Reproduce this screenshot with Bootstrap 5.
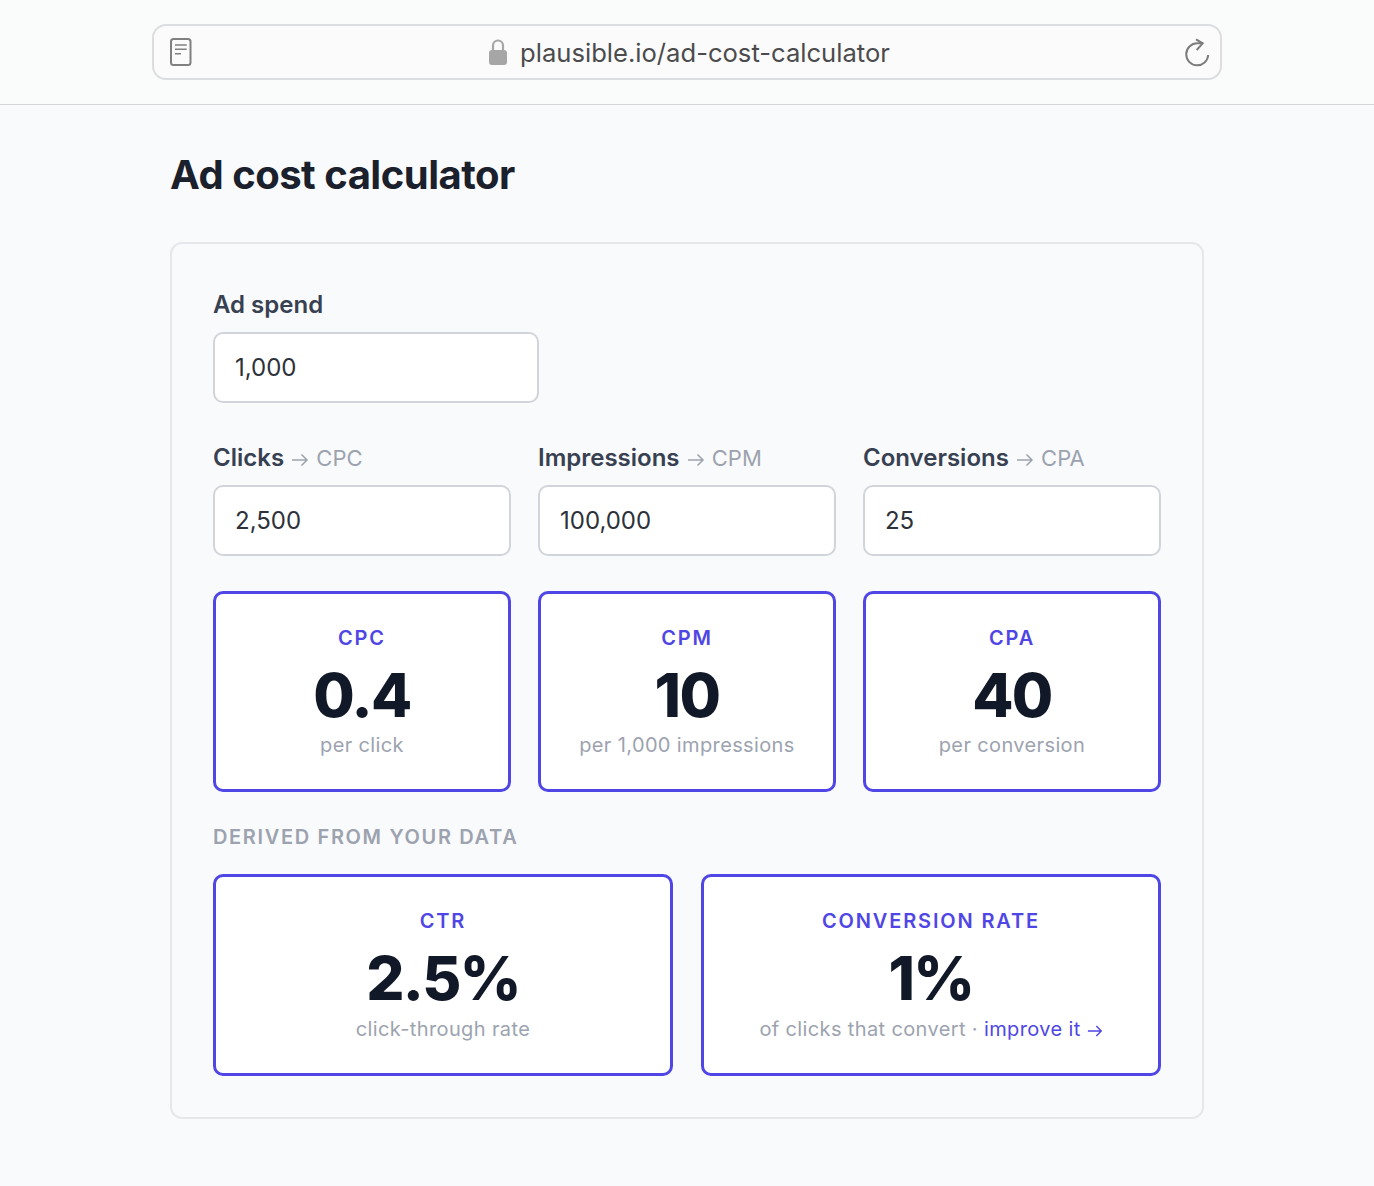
<!DOCTYPE html>
<html lang="en">
<head>
  <meta charset="UTF-8">
  <title>Ad cost calculator</title>
  <link href="https://cdn.jsdelivr.net/npm/bootstrap@5.3.3/dist/css/bootstrap.min.css" rel="stylesheet">
  <style>
    body { background: #f9fafb; font-family: Inter, "Liberation Sans", sans-serif; color: #111827; height: 1186px; overflow: hidden; }
    .browser-bar { height: 105px; padding: 24px 152px 0; background: #fafbfb; border-bottom: 1px solid #d5d6d8; }
    .url-box { height: 56px; padding: 0 10px 0 16px; border: 2px solid #dcdddf; border-radius: 14px; background: #fbfbfc; }
    .url-text { font-size: 25.6px; color: #4b4b4d; padding-top: 2px; }
    .url-center { gap: 13px; padding: 1px 0 0 3px; }
    .page-wrap { width: 1034px; margin-left: 170px; }
    .page-title { font-size: 40px; font-weight: 700; letter-spacing: -0.5px; color: #1a202c; line-height: 48px; margin: 46px 0 43px 0; }
    .calc-box { height: 877px; padding: 45px 41px 0; background: #f9fafb; border: 2px solid #e5e7eb; border-radius: 12px; }
    .field-label { display: block; font-size: 24px; font-weight: 600; color: #374151; line-height: 32px; margin-bottom: 11px; }
    .field-hint { font-weight: 400; color: #9ca3af; font-size: 22px; }
    .field-hint svg { vertical-align: -1px; margin: 0 1px; }
    .form-control.calc-input { height: 71px; padding: 0 20px; font-size: 24px; color: #2d3139; background: #fff; border: 2px solid #d1d5db; border-radius: 10px; }
    .spend-col { width: 326px; margin-bottom: 39px; }
    .three-row { --bs-gutter-x: 27px; }
    .two-row { --bs-gutter-x: 28px; }
    .two-row .metric-tile { height: 202px; }
    .two-row .metric-sub { margin-top: 1px; }
    .metric-row { margin-top: 35px; }
    .metric-tile { height: 201px; padding-top: 30px; background: #fff; border: 3px solid #4f46e5; border-radius: 10px; text-align: center; }
    .metric-name { font-size: 20px; font-weight: 600; color: #4f46e5; letter-spacing: 1.85px; line-height: 28px; }
    .metric-num { font-size: 60px; font-weight: 800; color: #111827; line-height: 72px; margin-top: 7px; letter-spacing: -1.6px; }
    .metric-sub { font-size: 20px; color: #9ca3af; letter-spacing: .37px; line-height: 28px; }
    .metric-sub a { color: #4f46e5; text-decoration: none; }
    .section-cap { font-size: 20px; font-weight: 600; color: #9ca3af; letter-spacing: 1.65px; line-height: 28px; margin: 31px 0 23px; }
  </style>
</head>
<body>
<div class="browser-bar">
  <div class="url-box d-flex align-items-center justify-content-between">
    <svg width="22" height="28" viewBox="0 0 22 28" fill="none" stroke="#808080" stroke-width="2">
      <rect x="1" y="1" width="19.500" height="26" rx="2.5"/>
      <path d="M5 7h11.700M5 11.300h11.700M5 15.700h6" stroke-width="1.5"/>
    </svg>
    <div class="url-center d-flex align-items-center">
      <svg width="18" height="26" viewBox="0 0 18 26">
        <path d="M4 12V6.500a5 5 0 0 1 10 0V12" fill="none" stroke="#a6a6a6" stroke-width="2.2"/>
        <rect x="0" y="11" width="18" height="15" rx="3" fill="#a6a6a6"/>
      </svg>
      <span class="url-text">plausible.io/ad-cost-calculator</span>
    </div>
    <svg width="26" height="30" viewBox="0 0 26 30" fill="none" stroke="#7d7d7d" stroke-width="2">
      <path d="M18.700 6.300H13.200A11 11 0 1 0 24.200 18"/>
      <path d="M12 2.300l6.700 4-6 6.700"/>
    </svg>
  </div>
</div>

<div class="page-wrap">
  <h1 class="page-title">Ad cost calculator</h1>
  <div class="calc-box">
    <div class="spend-col">
      <label class="field-label" for="spend">Ad spend</label>
      <input class="form-control calc-input" id="spend" value="1,000">
    </div>

    <div class="row three-row">
      <div class="col-4">
        <label class="field-label" for="clicks">Clicks <span class="field-hint"><svg width="18" height="14" viewBox="0 0 18 14" fill="none" stroke="#9ca3af" stroke-width="1.5"><path d="M1 7h15M10.500 1.500 16 7l-5.500 5.500"/></svg> CPC</span></label>
        <input class="form-control calc-input" id="clicks" value="2,500">
      </div>
      <div class="col-4">
        <label class="field-label" for="impressions">Impressions <span class="field-hint"><svg width="18" height="14" viewBox="0 0 18 14" fill="none" stroke="#9ca3af" stroke-width="1.5"><path d="M1 7h15M10.500 1.500 16 7l-5.500 5.500"/></svg> CPM</span></label>
        <input class="form-control calc-input" id="impressions" value="100,000">
      </div>
      <div class="col-4">
        <label class="field-label" for="conversions">Conversions <span class="field-hint"><svg width="18" height="14" viewBox="0 0 18 14" fill="none" stroke="#9ca3af" stroke-width="1.5"><path d="M1 7h15M10.500 1.500 16 7l-5.500 5.500"/></svg> CPA</span></label>
        <input class="form-control calc-input" id="conversions" value="25">
      </div>
    </div>

    <div class="row three-row metric-row">
      <div class="col-4">
        <div class="metric-tile">
          <div class="metric-name">CPC</div>
          <div class="metric-num">0.4</div>
          <div class="metric-sub">per click</div>
        </div>
      </div>
      <div class="col-4">
        <div class="metric-tile">
          <div class="metric-name">CPM</div>
          <div class="metric-num">10</div>
          <div class="metric-sub">per 1,000 impressions</div>
        </div>
      </div>
      <div class="col-4">
        <div class="metric-tile">
          <div class="metric-name">CPA</div>
          <div class="metric-num">40</div>
          <div class="metric-sub">per conversion</div>
        </div>
      </div>
    </div>

    <div class="section-cap">DERIVED FROM YOUR DATA</div>

    <div class="row two-row">
      <div class="col-6">
        <div class="metric-tile">
          <div class="metric-name">CTR</div>
          <div class="metric-num">2.5%</div>
          <div class="metric-sub">click-through rate</div>
        </div>
      </div>
      <div class="col-6">
        <div class="metric-tile">
          <div class="metric-name">CONVERSION RATE</div>
          <div class="metric-num">1%</div>
          <div class="metric-sub">of clicks that convert · <a href="#">improve it <svg width="16" height="14" viewBox="0 0 18 14" fill="none" stroke="#4f46e5" stroke-width="1.6"><path d="M1 7h15M10.500 1.500 16 7l-5.500 5.500"/></svg></a></div>
        </div>
      </div>
    </div>
  </div>
</div>
<script src="https://cdn.jsdelivr.net/npm/bootstrap@5.3.3/dist/js/bootstrap.bundle.min.js"></script>
</body>
</html>
